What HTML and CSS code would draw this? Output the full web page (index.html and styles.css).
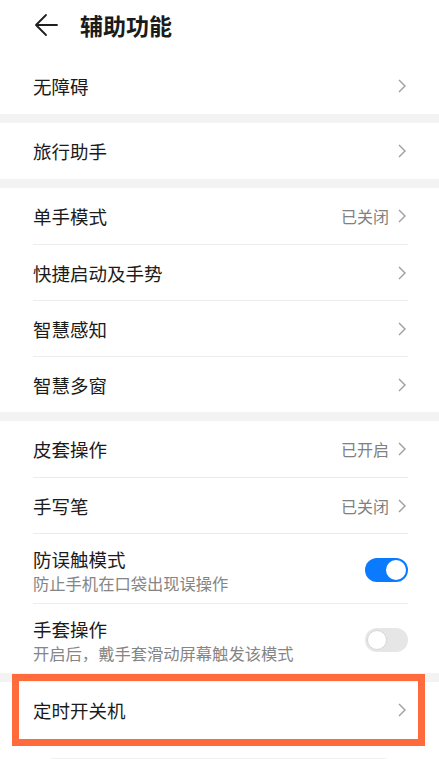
FILE: index.html
```html
<!DOCTYPE html>
<html lang="zh-CN">
<head>
<meta charset="utf-8">
<title>辅助功能</title>
<link rel="stylesheet" href="styles.css">
</head>
<body>
<div class="page">
  <header class="topbar">
    <svg class="back" width="24" height="24" viewBox="0 0 24 24" aria-hidden="true">
      <path d="M23 12H2M12 2L2 12l10 10" fill="none" stroke="#1e1e1e" stroke-width="1.8" stroke-linecap="round" stroke-linejoin="round"/>
    </svg>
    <h1 class="title">辅助功能</h1>
  </header>

  <section class="group">
    <div class="row"><span class="label">无障碍</span><span class="end"><svg class="chev" width="8" height="14" viewBox="0 0 8 14"><path d="M1 1l6 6-6 6" fill="none" stroke="#9d9d9d" stroke-width="1.4"/></svg></span></div>
  </section>

  <section class="group">
    <div class="row"><span class="label">旅行助手</span><span class="end"><svg class="chev" width="8" height="14" viewBox="0 0 8 14"><path d="M1 1l6 6-6 6" fill="none" stroke="#9d9d9d" stroke-width="1.4"/></svg></span></div>
  </section>

  <section class="group">
    <div class="row"><span class="label">单手模式</span><span class="end"><span class="status">已关闭</span><svg class="chev" width="8" height="14" viewBox="0 0 8 14"><path d="M1 1l6 6-6 6" fill="none" stroke="#9d9d9d" stroke-width="1.4"/></svg></span></div>
    <div class="row"><span class="label">快捷启动及手势</span><span class="end"><svg class="chev" width="8" height="14" viewBox="0 0 8 14"><path d="M1 1l6 6-6 6" fill="none" stroke="#9d9d9d" stroke-width="1.4"/></svg></span></div>
    <div class="row"><span class="label">智慧感知</span><span class="end"><svg class="chev" width="8" height="14" viewBox="0 0 8 14"><path d="M1 1l6 6-6 6" fill="none" stroke="#9d9d9d" stroke-width="1.4"/></svg></span></div>
    <div class="row"><span class="label">智慧多窗</span><span class="end"><svg class="chev" width="8" height="14" viewBox="0 0 8 14"><path d="M1 1l6 6-6 6" fill="none" stroke="#9d9d9d" stroke-width="1.4"/></svg></span></div>
  </section>

  <section class="group">
    <div class="row"><span class="label">皮套操作</span><span class="end"><span class="status">已开启</span><svg class="chev" width="8" height="14" viewBox="0 0 8 14"><path d="M1 1l6 6-6 6" fill="none" stroke="#9d9d9d" stroke-width="1.4"/></svg></span></div>
    <div class="row"><span class="label">手写笔</span><span class="end"><span class="status">已关闭</span><svg class="chev" width="8" height="14" viewBox="0 0 8 14"><path d="M1 1l6 6-6 6" fill="none" stroke="#9d9d9d" stroke-width="1.4"/></svg></span></div>
    <div class="row two">
      <div class="texts"><span class="label">防误触模式</span><span class="sub">防止手机在口袋出现误操作</span></div>
      <span class="switch on"><span class="knob"></span></span>
    </div>
    <div class="row two">
      <div class="texts"><span class="label">手套操作</span><span class="sub">开启后，戴手套滑动屏幕触发该模式</span></div>
      <span class="switch off"><span class="knob"></span></span>
    </div>
  </section>

  <section class="group last">
    <div class="row highlighted"><span class="label">定时开关机</span><span class="end"><svg class="chev" width="8" height="14" viewBox="0 0 8 14"><path d="M1 1l6 6-6 6" fill="none" stroke="#9d9d9d" stroke-width="1.4"/></svg></span>
      <span class="mark"></span>
    </div>
    <div class="footer-card"></div>
  </section>
</div>
</body>
</html>
```

FILE: styles.css
```css
html, body {
  margin: 0;
  padding: 0;
  background: #f3f3f3;
}
body {
  font-family: "Noto Sans CJK SC", "Noto Sans", sans-serif;
  color: #1b1b1b;
  overflow: hidden;
}
.page {
  width: 439px;
  height: 759px;
  overflow: hidden;
  display: flex;
  flex-direction: column;
  gap: 9px;
}
.page > * {
  flex-shrink: 0;
}
.topbar {
  background: #fff;
  height: 58px;
  margin-bottom: -9px;
  display: flex;
  align-items: center;
  padding: 0 0 8px 34px;
  box-sizing: border-box;
  gap: 22px;
}
.back {
  display: block;
}
.title {
  margin: 0;
  font-size: 23px;
  font-weight: 700;
  letter-spacing: 0;
  line-height: 30px;
}
.group {
  background: #fff;
  padding: 0 31px 0 33px;
}
.row {
  height: 56px;
  display: flex;
  align-items: center;
  justify-content: space-between;
  border-top: 1px solid #ececec;
  box-sizing: border-box;
}
.row:first-child {
  border-top: none;
}
.label {
  font-size: 18.5px;
  line-height: 26px;
}
.end {
  display: flex;
  align-items: center;
  gap: 9px;
  padding-right: 2px;
}
.status {
  font-size: 16px;
  color: #808080;
  line-height: 22px;
}
.chev {
  display: block;
}
.row.two {
  height: auto;
  padding: 12px 0 9px;
  align-items: center;
}
.texts {
  display: flex;
  flex-direction: column;
}
.sub {
  font-size: 16.3px;
  line-height: 22px;
  color: #858585;
}
.switch {
  width: 43px;
  height: 24px;
  border-radius: 12px;
  box-sizing: border-box;
  display: flex;
  align-items: center;
  padding: 2px;
}
.switch.on {
  background: #0a7bff;
  justify-content: flex-end;
}
.switch.off {
  background: #e6e6e6;
  justify-content: flex-start;
}
.knob {
  width: 20px;
  height: 20px;
  border-radius: 50%;
  background: #fff;
  box-sizing: border-box;
}
.switch.off .knob {
  border: 1px solid #d6d6d6;
}
.group.last {
  flex: 1 0 auto;
  display: flex;
  flex-direction: column;
}
.highlighted {
  position: relative;
  flex-shrink: 0;
}
.mark {
  position: absolute;
  left: -21px;
  right: -17px;
  top: -8px;
  bottom: -8px;
  border: 7px solid #ff6b3d;
  pointer-events: none;
}
.footer-card {
  flex-shrink: 0;
  margin: 20px 7px 0 4px;
  height: 40px;
  border-radius: 18px;
  background: #f0f0f0;
}
```
